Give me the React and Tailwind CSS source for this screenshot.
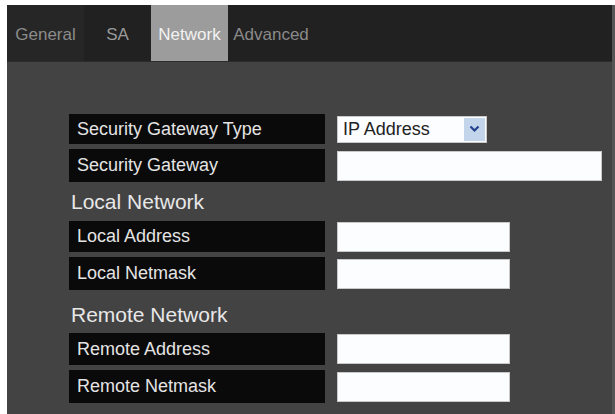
import React from 'react';

const tabs = [
  { name: 'General', w: 'w-[77px]', cls: 'text-[#8c8c8c] bg-[#262626]' },
  { name: 'SA', w: 'w-[67px]', cls: 'text-[#9a9a9a]' },
  { name: 'Network', w: 'w-[77px]', cls: 'text-[#f2f2f2] bg-[#9c9c9c]' },
  { name: 'Advanced', w: 'w-[86px]', cls: 'text-[#8a8a8a]' },
];

function Label({ children, className = '' }) {
  return (
    <div className={`w-[256px] bg-[#0a0a0a] flex items-center pl-2 text-[18px] text-[#e4e4e4] ${className}`}>
      {children}
    </div>
  );
}

function Field({ w }) {
  return <input readOnly className={`${w} h-[30px] bg-[#fcfdff] border border-[#c9c9c9] outline-none`} />;
}

export default function App() {
  return (
    <div
      className="w-[615px] h-[414px] bg-white pt-[5px] pl-[7px] overflow-hidden"
      style={{ fontFamily: '"Liberation Sans", Arial, sans-serif' }}
    >
      <div className="h-full border-r-[3px] border-[#555] bg-[#434343] flex flex-col">
        {/* Tab bar */}
        <div className="h-[57px] bg-[#212121] flex border-b border-[#2c2c2c]">
          {tabs.map((t) => (
            <div key={t.name} className={`${t.w} h-full flex items-center justify-center pt-[4px] text-[17px] ${t.cls}`}>
              {t.name}
            </div>
          ))}
        </div>

        {/* Form */}
        <div className="pl-[62px] pt-[52px] flex flex-col">
          <div className="flex items-center gap-3 h-[30px]">
            <Label className="h-[30px]">Security Gateway Type</Label>
            <div className="w-[150px] h-[27px] bg-[#fcfdff] border border-[#c9c9c9] flex items-center pl-[5px] pr-[1px] text-[18px] text-[#222]">
              <span className="flex-1">IP Address</span>
              <div className="w-[21px] h-[23px] bg-[#c3d5ea] flex items-center justify-center">
                <svg width="11" height="8" viewBox="0 0 11 8">
                  <path d="M1.5 1.5 L5.5 5.5 L9.5 1.5" fill="none" stroke="#23408c" strokeWidth="2.2" />
                </svg>
              </div>
            </div>
          </div>
          <div className="flex items-center gap-3 h-[33px] mt-[5px]">
            <Label className="h-[33px]">Security Gateway</Label>
            <Field w="w-[265px]" />
          </div>

          <div className="mt-[8px] pl-[2px] h-[24px] leading-[24px] text-[21px] text-[#e8e8e8]">Local Network</div>

          <div className="flex items-center gap-3 h-[31px] mt-[7px]">
            <Label className="h-[31px]">Local Address</Label>
            <Field w="w-[173px]" />
          </div>
          <div className="flex items-center gap-3 h-[33px] mt-[5px]">
            <Label className="h-[33px]">Local Netmask</Label>
            <Field w="w-[173px]" />
          </div>

          <div className="mt-[13px] pl-[2px] h-[24px] leading-[24px] text-[21px] text-[#e8e8e8]">Remote Network</div>

          <div className="flex items-center gap-3 h-[32px] mt-[6px]">
            <Label className="h-[32px]">Remote Address</Label>
            <Field w="w-[173px]" />
          </div>
          <div className="flex items-center gap-3 h-[33px] mt-[5px]">
            <Label className="h-[33px]">Remote Netmask</Label>
            <Field w="w-[173px]" />
          </div>
        </div>
      </div>
    </div>
  );
}
